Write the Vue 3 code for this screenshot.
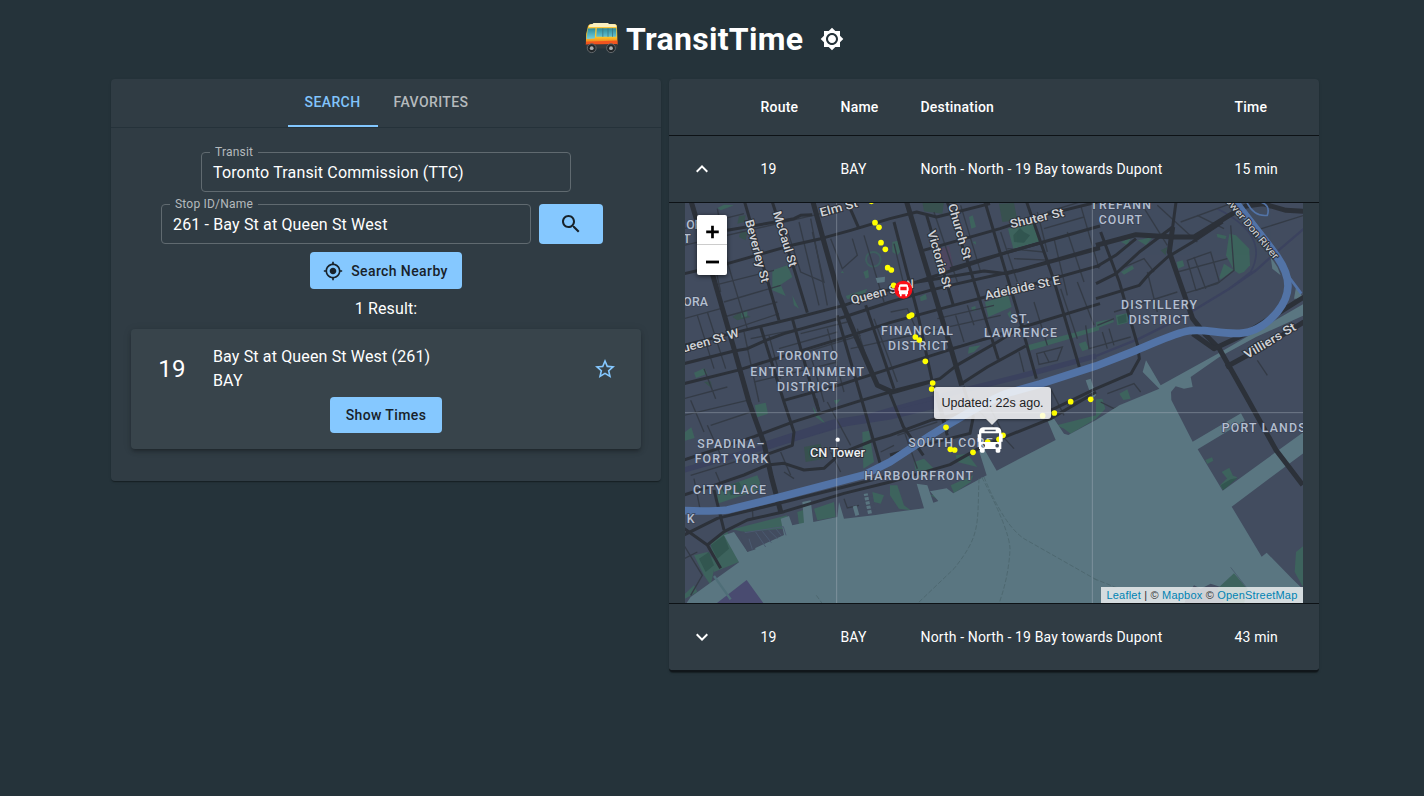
<script setup>
const rows = [
  { route: '19', name: 'BAY', dest: 'North - North - 19 Bay towards Dupont', time: '15 min', open: true },
  { route: '19', name: 'BAY', dest: 'North - North - 19 Bay towards Dupont', time: '43 min', open: false },
]

const majorRoads = [
  'M0 215 L130 185 L330 128 L410 110 L500 85 L618 50 L698 30 L758 45 L918 5',
  'M130 85 L330 50 L350 40 L385 38',
  'M182 0 L285 355', 'M265 0 L330 200 L370 332',
  'M0 430 L180 385 L345 345 L480 310 L618 262 L698 240 L958 155 L1078 120 L1248 72',
  'M0 485 L150 447 L190 440 L245 415 L300 395 L480 345 L618 300 L738 265 L808 248 L1000 205 L1248 135',
  'M0 545 L160 505 L470 410 L618 362 L808 310 L1018 255 L1248 190',
  'M230 375 L300 600 L330 690 L325 730 L255 755', 'M325 350 L395 600 L405 628', 'M460 340 L535 600 L590 790',
  'M545 310 L630 560', 'M490 0 L525 80', 'M630 60 L700 330 L745 540 L790 700',
  'M300 595 L470 548 L618 500 L808 440 L1018 375 L1248 305',
  'M618 568 L768 530 L818 490 L940 420 L1020 370', 'M832 545 L910 495 L1025 432',
  'M718 145 L948 80 L1038 50 L1240 0', 'M798 200 L900 170 L1080 120',
  'M700 240 L900 207 L970 215 L1248 140',
  'M790 0 L858 200 L943 472', 'M903 0 L998 320 L1057 530', 'M1028 0 L1108 230 L1186 495', 'M728 40 L808 310',
  'M1236 195 L1295 160 L1356 110', 'M1236 245 L1296 215 L1366 150 L1466 75 L1476 0',
  'M1236 290 L1366 250 L1396 215 L1451 165 L1526 120 L1616 60',
  'M1250 90 L1306 240 L1361 430 L1366 470 L1341 515 L1236 560 L1100 625',
  'M0 774 L210 704 L330 659 L520 599 L618 570', 'M618 575 L740 540',
  'M0 879 L90 850 L180 819 L250 789 L300 784 L360 804 L420 799 L470 754 L570 714 L618 700 L740 655 L870 625',
  'M0 999 L100 949 L300 900 L480 855 L618 820', 'M90 864 L120 984',
  'M0 979 L70 1029 L110 1099', 'M70 1029 L120 989 L190 954 L300 929 L480 874 L618 840 L798 788 L900 730 L1100 650 L1236 570',
  'M838 554 L868 644 L858 694 L738 724 L618 759', 'M618 575 L658 674 L718 760', 'M758 570 L790 690', 'M395 590 L405 628',
]
const arterials = [
  'M22 0 L85 215 L150 440 L195 600 L240 724 L262 824 L290 929', 'M387 0 L420 120 L465 280 L510 390 L580 550 L625 570',
  'M668 0 L713 150 L798 430 L833 550', 'M1236 130 L1356 98 L1466 105 L1531 105 L1636 40 L1686 12 L1736 5 L1806 25 L1860 28',
  'M1466 75 L1456 150 L1491 250 L1526 350 L1566 400 L1606 440 L1696 600 L1776 744 L1856 849',
  'M1526 395 L1590 440 L1676 400 L1860 285', 'M1626 495 L1736 435 L1860 360',
]
const minorRoads = [
  'M100 20 L130 180 L190 380', 'M60 40 L110 270', 'M0 80 L180 35', 'M0 130 L410 35', 'M90 250 L270 205', 'M120 300 L290 250',
  'M310 85 L350 210 L420 240 L385 90', 'M345 60 L405 310', 'M380 50 L430 310', 'M120 345 L280 300', 'M135 385 L285 335',
  'M40 340 L90 500', 'M70 330 L125 500', 'M0 350 L110 320', 'M180 390 L225 600', 'M200 410 L350 380', 'M255 400 L290 530',
  'M350 395 L490 360', 'M285 440 L460 390', 'M365 450 L530 400', 'M0 590 L130 555', 'M60 500 L95 590', 'M440 110 L475 200 L520 160 L505 110',
  'M210 540 L460 480', 'M380 460 L420 600', 'M430 380 L480 570', 'M520 380 L560 510', 'M570 350 L640 540', 'M500 440 L680 400',
  'M540 100 L600 300', 'M630 125 L660 250', 'M620 330 L670 320 L700 390', 'M640 410 L770 380', 'M760 350 L930 310', 'M770 380 L950 340', 'M815 340 L840 420', 'M850 310 L870 370',
  'M790 440 L920 410', 'M750 30 L820 240', 'M830 10 L890 210', 'M950 90 L1000 240', 'M970 140 L1080 150', 'M990 170 L1110 175', 'M1060 30 L1090 150',
  'M1110 110 L1150 280', 'M1150 90 L1200 240', 'M1190 10 L1245 200', 'M1090 30 L1220 -10', 'M1080 80 L1200 45', 'M1050 300 L1090 430', 'M1130 260 L1180 410',
  'M1180 240 L1230 370', 'M1058 455 L1135 435 L1120 475 L1065 487 Z', 'M1080 450 L1095 480', 'M1005 450 L1020 510', 'M1205 370 L1215 440 L1340 405',
  'M1510 175 L1580 150 L1606 240 L1536 265 Z', 'M1480 210 L1630 170', 'M1530 165 L1565 260', 'M1640 70 L1650 205 L1600 245 L1500 275', 'M1375 10 L1450 130',
  'M1420 10 L1540 120', 'M1490 60 L1640 5', 'M1540 40 L1620 80', 'M1700 90 L1860 40', 'M1310 200 L1380 170 L1410 210', 'M1290 330 L1480 270', 'M1390 210 L1420 330',
  'M1240 370 L1290 350', 'M1255 390 L1270 440', 'M1275 380 L1290 430', 'M1720 475 L1750 520', 'M1270 575 L1350 545 L1370 570', 'M1250 600 L1290 620 L1340 600',
  'M20 595 L60 690', 'M0 640 L190 595', 'M70 670 L110 760', 'M80 670 L200 630', 'M20 820 L250 750', 'M30 830 L50 930', 'M95 810 L120 870', 'M290 750 L320 820', 'M440 750 L470 810',
  'M0 1030 L55 1120 L20 1180', 'M0 1070 L40 1050', 'M430 600 L500 730', 'M590 750 L630 730', 'M480 890 L490 918 L525 910', 'M640 630 L700 800', 'M870 610 L990 740', 'M920 620 L960 700',
  'M1100 560 L1140 640', 'M1150 610 L1200 590', 'M640 700 L760 660', 'M205 920 L207 950', 'M300 810 L330 830',
]
const parks = [
  '265,205 310,190 325,225 290,248 305,282 290,275 265,265', '325,280 345,320 330,310', '172,332 190,325 190,343 172,347', '30,512 62,498 70,515 36,528',
  '100,18 120,8 150,10 110,25', '485,282 550,260 540,280 490,292', '538,210 552,203 555,226 545,230', '470,212 475,206 480,214', '625,120 645,115 655,140 640,160 625,150',
  '855,45 866,40 876,75 862,80', '972,80 1048,60 1068,118 988,140', '903,300 973,280 983,315 913,345', '970,335 980,325 985,360', '708,285 725,276 729,292 710,298',
  '862,316 874,312 876,326 864,328', '855,435 890,430 870,450 852,455', '1030,430 1245,372 1245,385 1036,446', '1184,425 1205,418 1215,440 1195,448', '865,120 875,118 876,128',
  '1236,360 1286,350 1290,360 1236,380', '1295,340 1336,332 1331,362 1300,370', '1361,115 1406,105 1386,130', '1311,120 1340,108 1330,130', '1478,180 1496,175 1501,192 1482,200',
  '1598,95 1628,102 1624,112 1600,106', '1636,95 1656,100 1696,140 1698,190 1680,210 1665,215 1650,205 1626,160', '1606,225 1620,185 1650,205 1610,232', '1311,210 1345,190 1350,200 1320,218',
  '450,595 470,592 456,608', '212,610 245,602 252,635 220,646', '3,690 22,676 32,708 3,716', '385,612 400,635 428,668 395,645', '535,690 555,686 570,780 538,800',
  '100,862 220,820 235,860 100,905', '145,982 310,940 300,980 180,990', '80,1020 130,990 165,1080 90,1110', '30,1060 70,1050 95,1080 80,1150 60,1120', '3,1175 30,1150 40,1170 3,1190',
  '340,930 368,920 372,960 345,968', '390,920 450,900 455,945 400,955', '565,870 600,880 590,905 570,900', '690,780 720,770 750,800 700,830', '618,850 640,850 660,910 680,925 645,920 618,880',
  '800,850 868,820 860,840 810,874', '740,880 760,875 765,895', '815,760 850,755 880,795 820,780', '1118,670 1140,680 1160,695 1236,650 1236,640', '1236,592 1255,590 1264,620 1236,650',
  '1306,575 1330,562 1340,590 1318,594', '1564,774 1584,766 1588,776 1570,786', '1613,810 1636,797 1648,824 1630,830', '1608,850 1640,818 1660,826 1618,865', '1836,1050 1860,1030 1860,1160 1832,1110',
]
const darkParks = [
  '145,345 170,330 200,345 160,355', '165,42 185,40 180,60 160,65', '170,85 190,90 185,115 165,105', '715,0 780,0 775,35 720,28', '945,5 990,3 1000,55 955,60',
  '1430,145 1450,135 1445,160', '60,540 80,538 85,560', '360,735 410,725 420,770 365,780',
]
const deepParks = [
  '988,100 1008,78 1020,90 1038,100 1020,122 990,120', '45,1070 75,1050 90,1090 65,1110', '80,1030 120,1000 135,1040 100,1070', '130,850 165,840 180,868 140,880',
  '1300,345 1325,336 1328,360 1304,366', '1610,850 1640,832 1660,828 1618,865', '370,742 400,732 412,762 376,768',
]

const districts = [
  ['TORONTO', 278, 474, 184], ['ENTERTAINMENT', 199, 521, 341], ['DISTRICT', 279, 566, 181], ['FINANCIAL', 591, 399, 216], ['DISTRICT', 612, 445, 180],
  ['ST.', 979, 362, 59], ['LAWRENCE', 900, 406, 219], ['TREFANN', 1219, 22, 182], ['COURT', 1244, 66, 130], ['DISTILLERY', 1311, 320, 228], ['DISTRICT', 1334, 365, 181],
  ['SPADINA–', 40, 738, 201], ['FORT YORK', 32, 783, 220], ['CITYPLACE', 27, 875, 219], ['K', 8, 962, 24], ['HARBOURFRONT', 541, 835, 326], ['SOUTH CORE', 673, 736, 253],
  ['PORT LANDS', 1613, 691, 252], ['ORA', -2, 313, 74], ['OR', 7, 80, 48], ['T', -2, 123, 18],
]
const streets = [
  ['Elm St', 411, 44, 116, -15], ['Beverley St', 183, 56, 194, 75], ['McCaul St', 266, 32, 172, 73], ['Queen St W', 504, 307, 196, -15], ['Queen St W', -27, 459, 202, -16],
  ['Victoria St', 730, 89, 180, 74], ['Church St', 792, 9, 172, 74], ['Shuter St', 981, 79, 165, -13], ['Adelaide St E', 905, 293, 230, -12], ['Villiers St', 1690, 471, 173, -31],
]
const dots = [
  [562, -2], [573, 62], [585, 76], [591, 122], [604, 142], [611, 197], [622, 204], [629, 250], [676, 343], [683, 339], [694, 405], [706, 414], [724, 478], [746, 543], [743, 561],
  [786, 676], [799, 742], [812, 744], [867, 751], [911, 720], [945, 712], [957, 700], [1076, 641], [1111, 633], [1160, 599], [1220, 592],
]
</script>

<template>
  <div class="page">
    <header class="header">
      <svg class="bus-logo" viewBox="0 0 34 32">
        <defs>
          <linearGradient id="busBody" x1="0" y1="0" x2="0" y2="1"><stop offset="0" stop-color="#f9c440" /><stop offset=".6" stop-color="#ffc928" /><stop offset=".78" stop-color="#f59a23" /><stop offset="1" stop-color="#e5401e" /></linearGradient>
          <linearGradient id="busGlass" x1="0" y1="0" x2="0" y2="1"><stop offset="0" stop-color="#2b8b9c" /><stop offset="1" stop-color="#74cfdc" /></linearGradient>
        </defs>
        <path d="M3 4 Q4 2 6 2 L29 2 Q32 2 32 5 L32.5 23 L.8 23 L1.2 12 Z" fill="url(#busBody)" />
        <path d="M4 3.5 Q5 2 7.5 2 L8.5 1 L23 1 L24 2 L30 2.3 Q32 3 31.5 5 L4 5 Z" fill="#fbf0bf" />
        <path d="M2.8 6.5 L10.5 6.3 L9.8 16.5 L1.5 17 Z M11.8 6.3 H31.3 V14.8 H11.2 Z" fill="url(#busGlass)" />
        <path d="M17.8 6.3 V14.8 M23 6.3 V14.8 M27.5 6.3 V14.8" stroke="#3f747d" stroke-width=".8" />
        <path d="M1 19.8 L32.4 18.5 V22.5 H1 Z" fill="#f2551f" />
        <path d="M1 22.5 L32.5 22 V26.5 H1.2 Z" fill="#353b3e" />
        <g fill="#22272a" stroke="#62676a" stroke-width="1"><circle cx="6.7" cy="26.2" r="4.4" /><circle cx="26" cy="26.2" r="4.4" /></g>
        <g fill="#a9adaf"><circle cx="6.7" cy="26.2" r="1.9" /><circle cx="26" cy="26.2" r="1.9" /></g>
      </svg>
      <h1 class="title">TransitTime</h1>
      <svg class="icon theme" viewBox="0 0 24 24"><path d="M20 8.69V4h-4.69L12 .69 8.69 4H4v4.69L.69 12 4 15.31V20h4.69L12 23.31 15.31 20H20v-4.69L23.31 12 20 8.69zM12 18c-3.31 0-6-2.69-6-6s2.69-6 6-6 6 2.69 6 6-2.69 6-6 6zm0-10c-2.21 0-4 1.79-4 4s1.79 4 4 4 4-1.79 4-4-1.79-4-4-4z" /></svg>
    </header>

    <main class="columns">
      <section class="panel search">
        <nav class="tabs">
          <button class="tab active">SEARCH</button>
          <button class="tab">FAVORITES</button>
        </nav>
        <fieldset class="field transit"><legend>Transit</legend><span>Toronto Transit Commission (TTC)</span></fieldset>
        <div class="stop-row">
          <fieldset class="field"><legend>Stop ID/Name</legend><span>261 - Bay St at Queen St West</span></fieldset>
          <button class="btn go">
            <svg class="icon" viewBox="0 0 24 24"><path d="M15.5 14h-.79l-.28-.27C15.41 12.59 16 11.11 16 9.5 16 5.91 13.09 3 9.5 3S3 5.91 3 9.5 5.91 16 9.5 16c1.61 0 3.09-.59 4.23-1.57l.27.28v.79l5 4.99L20.49 19l-4.99-5zm-6 0C7.01 14 5 11.99 5 9.5S7.01 5 9.5 5 14 7.01 14 9.5 11.99 14 9.5 14z" /></svg>
          </button>
        </div>
        <button class="btn nearby">
          <svg class="nearby-icon" viewBox="0 0 24 24"><path d="M12 8c-2.21 0-4 1.79-4 4s1.79 4 4 4 4-1.79 4-4-1.79-4-4-4zm8.94 3c-.46-4.17-3.77-7.48-7.94-7.94V1h-2v2.06C6.83 3.52 3.52 6.83 3.06 11H1v2h2.06c.46 4.17 3.77 7.48 7.94 7.94V23h2v-2.06c4.17-.46 7.48-3.77 7.94-7.94H23v-2h-2.06zM12 19c-3.87 0-7-3.13-7-7s3.13-7 7-7 7 3.13 7 7-3.13 7-7 7z" /></svg>
          <span>Search Nearby</span>
        </button>
        <p class="count">1 Result:</p>
        <article class="card">
          <div class="card-top">
            <span class="num">19</span>
            <div class="stop"><div>Bay St at Queen St West (261)</div><div>BAY</div></div>
            <svg class="star" viewBox="0 0 24 24"><path d="M22 9.24l-7.19-.62L12 2 9.19 8.63 2 9.24l5.46 4.73L5.82 21 12 17.27 18.18 21l-1.63-7.03L22 9.24zM12 15.4l-3.76 2.27 1-4.28-3.32-2.88 4.38-.38L12 6.1l1.71 4.04 4.38.38-3.32 2.88 1 4.28L12 15.4z" /></svg>
          </div>
          <button class="btn times">Show Times</button>
        </article>
      </section>

      <section class="panel results">
        <div class="row head"><span></span><span>Route</span><span>Name</span><span>Destination</span><span>Time</span></div>
        <template v-for="(r, i) in rows" :key="i">
          <div class="row">
            <svg class="chev" viewBox="0 0 24 24"><path :d="r.open ? 'M7.41 15.41 12 10.83l4.59 4.58L18 14l-6-6-6 6z' : 'M7.41 8.59 12 13.17l4.59-4.58L18 10l-6 6-6-6z'" /></svg>
            <span>{{ r.route }}</span><span>{{ r.name }}</span><span>{{ r.dest }}</span><span>{{ r.time }}</span>
          </div>
          <div v-if="r.open" class="map-wrap">
            <div class="map">
              <svg class="tiles" viewBox="3 3 1854 1200">
                <rect x="0" y="0" width="1860" height="1210" fill="#424c5f" />
                <g fill="#38514f"><polygon v-for="(p, k) in darkParks" :key="k" :points="p" /></g>
                <g fill="#3d635d"><polygon v-for="(p, k) in parks" :key="k" :points="p" /></g>
                <g fill="#325650"><polygon v-for="(p, k) in deepParks" :key="k" :points="p" /></g>
                <circle cx="568" cy="172" r="22" fill="none" stroke="#3d5d5e" stroke-width="6" />
                <polygon points="765,140 795,132 808,195 780,205" fill="#4d465f" />
                <g fill="none" stroke="#393f5e" stroke-width="16" opacity=".75">
                  <path d="M1236 462 L1038 515 L818 570 L618 625 L330 710 L0 804" />
                  <path d="M1860 80 L1766 160 L1716 205 L1636 260 L1496 345 L1366 410 L1236 462" stroke-width="7" />
                  <path d="M250 730 L450 665 L618 640 L760 605" stroke-width="26" /><path d="M1600 20 Q1760 100 1700 210 L1636 260" stroke-width="5" />
                </g>
                <g fill="none" stroke="#343b46" stroke-width="4"><path v-for="(d, k) in minorRoads" :key="k" :d="d" /></g>
                <g class="water">
                  <path d="M3 1210 L20 1185 L165 1081 L120 1000 L150 990 L190 1049 L300 999 L290 950 L315 942 L325 970 L360 962 L355 900 L380 895 L388 960 L460 945 L465 900 L480 950 L575 939 L618 932 L720 919 L698 845 L730 850 L748 902 L763 897 L738 868 L788 859 L808 874 L908 820 L883 740 L900 740 L938 806 L1115 714 L1090 655 L1110 650 L1140 695 L1153 699 L1236 654 L1306 610 L1426 560 L1376 510 L1386 475 L1430 550 L1601 455 L1756 365 L1860 305 V340 L1716 405 L1606 465 L1520 525 L1526 555 L1500 560 L1475 553 L1461 570 L1462 594 L1526 719 L1671 634 L1683 656 L1541 742 L1616 866 L1860 689 V752 L1643 914 L1733 1064 L1748 1052 L1826 1132 L1860 1165 V1210 Z" />
                  <polygon points="575,228 603,224 602,240 580,243" /><polygon points="1760,165 1780,195 1790,220 1765,200" /><polygon points="1836,255 1860,290 1830,290" /><polygon points="1205,535 1220,530 1236,580 1225,590" />
                </g>
                <g fill="#424c5f"><polygon points="165,992 180,988 215,1042 190,1050" /></g>
                <path d="M182 992 L298 974 M215 990 L245 1035 M195 1010 L205 1042 M235 988 L262 1022 M255 985 L280 1010 M275 980 L292 1000 M298 974 L306 1000" fill="none" stroke="#4b5a70" stroke-width="3" />
                <g stroke="#5a7681" stroke-width="12"><path d="M545 875 L558 935 M512 912 L520 940" /></g>
                <path d="M538 885 L565 880 M541 898 L568 893 M544 911 L571 906 M547 924 L574 919" stroke="#424c5f" stroke-width="4" />
                <polygon points="95,1206 188,1134 240,1206" fill="#494b70" />
                <g fill="#424c5f"><polygon points="1510,1180 1530,1150 1550,1160 1580,1145 1610,1155 1640,1206 1500,1206" /></g>
                <polygon points="1600,1160 1650,1114 1690,1160 1680,1206 1620,1206" fill="#3d635d" />
                <path d="M1640 1096 L1690 1160" stroke="#4b6070" stroke-width="3" />
                <g fill="none" stroke="#4e6870" stroke-width="3" stroke-dasharray="14 6">
                  <path d="M885 830 C880 970 890 1000 810 1100 L700 1205" /><path d="M893 825 Q975 980 978 1040 Q975 1120 945 1205" /><path d="M900 825 Q960 970 1020 1010 L1240 1135" /><path d="M1230 1130 L1300 1158" /><path d="M397 1180 L415 1205" />
                </g>
                <path d="M90 1122 L140 1192" stroke="#4f6e78" stroke-width="7" />
                <g class="roads">
                  <path v-for="(d, k) in majorRoads" :key="k" :d="d" stroke-width="9" />
                  <path v-for="(d, k) in arterials" :key="'a' + k" :d="d" stroke-width="15" />
                </g>
                <path d="M1688 0 Q1710 45 1750 40 Q1760 10 1730 0" fill="none" stroke="#5273a6" stroke-width="5" />
                <path d="M1800 205 L1852 275" fill="none" stroke="#5273a6" stroke-width="8" />
                <path class="river" d="M1655 0 C1690 50 1750 120 1780 165 C1825 230 1820 280 1780 330 C1750 365 1710 392 1666 394 C1600 396 1570 380 1516 386 C1470 393 1430 415 1356 445 L1236 492 L1068 546 L968 574 C880 610 800 665 740 700 L618 780 L540 819 L300 882 L130 924 Q80 929 0 926" />
                <g stroke="#b0bac3" stroke-opacity=".42" stroke-width="3"><path d="M458 0 V1210 M1225 0 V1210 M0 632 H1860" /></g>
                <g class="district"><text v-for="(l, k) in districts" :key="k" :x="l[1]" :y="l[2]" :textLength="l[3]" lengthAdjust="spacing">{{ l[0] }}</text></g>
                <g class="street">
                  <text v-for="(l, k) in streets" :key="k" :transform="`translate(${l[1]} ${l[2]}) rotate(${l[4]})`" :textLength="l[3]" lengthAdjust="spacingAndGlyphs">{{ l[0] }}</text>
                  <text class="river-name" transform="translate(1610 -18) rotate(50)" textLength="250" lengthAdjust="spacingAndGlyphs">Lower Don River</text>
                  <text class="poi" x="378" y="766" textLength="165" lengthAdjust="spacingAndGlyphs">CN Tower</text>
                </g>
                <circle cx="461" cy="713" r="6.5" fill="#fff" />
                <g fill="#ff0"><circle v-for="(d, k) in dots" :key="k" :cx="d[0]" :cy="d[1]" r="8.5" /></g>
                <circle cx="658" cy="263" r="27" fill="#fb1018" />
                <path fill="#fff" fill-rule="evenodd" d="M650 247 h17 q5 0 5 5 v4 h2 v10 h-2 v11 h-3 v6 h-5 v-6 h-11 v6 h-5 v-6 h-3 v-11 h-2 v-10 h2 v-4 q0 -5 5 -5 z M649 254 h19 v11 h-19 z" />
                <path fill="#fff" fill-rule="evenodd" d="M897 676 H940 Q952 678 952 690 V697 H956 V719 H952 V741 H949 V748 Q949 752 945 752 H939 Q935 752 935 748 V741 H902 V748 Q902 752 898 752 H892 Q888 752 888 748 V741 H885 V719 H881 V697 H885 V690 Q885 678 897 676 Z M902 683 H935 V688 H902 Z M892 694 H945 V720 H892 Z M892 731 a5.500 5.500 0 1 0 11 0 a5.500 5.500 0 1 0 -11 0 Z M934 731 a5.500 5.500 0 1 0 11 0 a5.500 5.500 0 1 0 -11 0 Z" />
              </svg>
              <div class="zoom">
                <svg viewBox="0 0 30 30"><path d="M9 17.5h13M15.5 11v13" /></svg>
                <svg viewBox="0 0 30 30"><path d="M9 17h13" /></svg>
              </div>
              <div class="tip">Updated: 22s ago.</div>
              <div class="credit"><a>Leaflet</a> | © <a>Mapbox</a> © <a>OpenStreetMap</a></div>
            </div>
          </div>
        </template>
      </section>
    </main>
  </div>
</template>

<style>
html, body { background: #25333a; }
</style>

<style scoped>
* { box-sizing: border-box; }
.page { width: 1424px; height: 796px; overflow: hidden; background: #25333a; color: #fff; font-family: Roboto, "Liberation Sans", sans-serif; font-size: 16px; letter-spacing: .15px; line-height: 24px; }
.header { height: 79px; padding-left: 585px; display: flex; align-items: flex-start; }
.bus-logo { width: 34px; height: 32px; margin-top: 22px; }
.title { margin: 18px 0 0 7px; font-size: 32px; line-height: 42px; font-weight: 700; letter-spacing: .3px; width: 178px; white-space: nowrap; }
.icon { width: 24px; height: 24px; fill: currentColor; }
.theme { margin: 27px 0 0 16px; }
.columns { display: flex; gap: 8px; margin-left: 111px; align-items: flex-start; }
.panel { background: #303c44; border-radius: 4px; box-shadow: 0 2px 1px -1px rgba(0,0,0,.2), 0 1px 1px rgba(0,0,0,.14), 0 1px 3px rgba(0,0,0,.12); }
.search { width: 550px; height: 402px; display: flex; flex-direction: column; align-items: center; }
.tabs { width: 100%; height: 49px; border-bottom: 1px solid #25323a; display: flex; justify-content: center; }
button { border: 0; padding: 0; font: inherit; letter-spacing: inherit; color: inherit; background: none; }
.tab { height: 48px; width: 107px; padding: 0 0 2px; font-size: 14px; font-weight: 500; letter-spacing: .4px; color: #b5babd; }
.tab.active { width: 90px; color: #82c4fb; border-bottom: 2px solid #82c7ff; padding-bottom: 0; }
.field { margin: 0; padding: 0 11px; width: 370px; height: 47px; border: 1px solid #606a70; border-radius: 4px; min-width: 0; }
.field legend { padding: 0 5px; margin-left: -3px; font-size: 12px; line-height: 14px; letter-spacing: .2px; color: #b5babd; height: 14px; }
.field span { display: block; line-height: 24px; margin-top: 2px; }
.transit { margin-top: 17px; }
.stop-row { width: 450px; display: flex; gap: 8px; margin-top: 5px; align-items: flex-end; }
.btn { background: #85c8ff; color: #18222a; border-radius: 4px; font-size: 14px; font-weight: 500; letter-spacing: .4px; display: flex; align-items: center; justify-content: center; }
.go { width: 64px; height: 40px; }
.nearby { width: 152px; height: 37px; margin-top: 8px; gap: 8px; padding-right: 1px; }
.nearby-icon { width: 20px; height: 20px; fill: currentColor; }
.count { margin: 8px 0 0; }
.card { width: 510px; height: 120px; margin-top: 8px; padding-top: 16px; border-radius: 4px; background: #38444b; box-shadow: 0 3px 3px -2px rgba(0,0,0,.2), 0 3px 4px rgba(0,0,0,.14), 0 1px 8px rgba(0,0,0,.12); }
.card-top { display: flex; align-items: center; padding-right: 24px; }
.num { width: 82px; text-align: center; font-size: 24px; letter-spacing: .3px; }
.stop { flex: 1; }
.star { width: 24px; height: 24px; fill: #85c8ff; }
.times { width: 112px; height: 36px; margin: 4px auto 0; }
.results { width: 650px; overflow: hidden; font-size: 14px; border-bottom: 2px solid #10161a; }
.row { display: grid; grid-template-columns: 76px 80px 80px 314px 100px; height: 67px; align-items: center; border-bottom: 1px solid #0d1216; letter-spacing: .14px; }
.row > span { padding-left: 15.5px; }
.head { height: 57px; font-weight: 500; letter-spacing: .2px; }
.row:last-child { border-bottom: 0; height: 66px; }
.chev { width: 24px; height: 24px; margin-left: 21px; fill: #fff; }
.map-wrap { padding: 0 16px; height: 401px; border-bottom: 1px solid #0d1216; }
.map { position: relative; width: 618px; height: 400px; overflow: hidden; }
.tiles { display: block; width: 618px; height: 400px; letter-spacing: 0; }
.water { fill: #5a7681; }
.roads { fill: none; stroke: #2c3139; stroke-linejoin: round; }
.river { fill: none; stroke: #5273a6; stroke-width: 23; }
.district text { font-size: 37px; font-weight: 500; fill: #b4bfd0; stroke: #3a4356; stroke-width: 4; paint-order: stroke; }
.street text { font-size: 36px; fill: #d2d4d8; font-weight: 500; stroke: #2c3139; stroke-width: 6; paint-order: stroke; }
.street .river-name { font-size: 30px; font-weight: 400; }
.street .poi { fill: #eef0f4; }
.zoom { position: absolute; left: 12px; top: 12px; width: 30px; height: 60px; background: #fff; border-radius: 2px; box-shadow: 0 1px 5px rgba(0,0,0,.65); display: flex; flex-direction: column; }
.zoom svg { width: 30px; height: 30px; fill: none; stroke: #000; stroke-width: 2.8; }
.zoom svg:first-child { border-bottom: 1px solid #ccc; }
.tip { position: absolute; left: 249px; top: 184px; width: 117px; height: 32px; border-radius: 3px; background: rgba(255,255,255,.82); box-shadow: 0 1px 3px rgba(0,0,0,.4); color: #222; font: 12.5px/32px "Liberation Sans", Arial, sans-serif; letter-spacing: 0; text-align: center; white-space: nowrap; }
.tip::after { content: ""; position: absolute; left: 52px; top: 32px; border: 6px solid transparent; border-top-color: rgba(255,255,255,.82); border-bottom: 0; }
.credit { position: absolute; right: 0; bottom: 0; width: 202px; height: 16px; background: rgba(255,255,255,.75); color: #333; font: 11px/16px "Liberation Sans", Arial, sans-serif; letter-spacing: .2px; text-align: center; white-space: nowrap; }
.credit a { color: #0083b3; }
</style>
